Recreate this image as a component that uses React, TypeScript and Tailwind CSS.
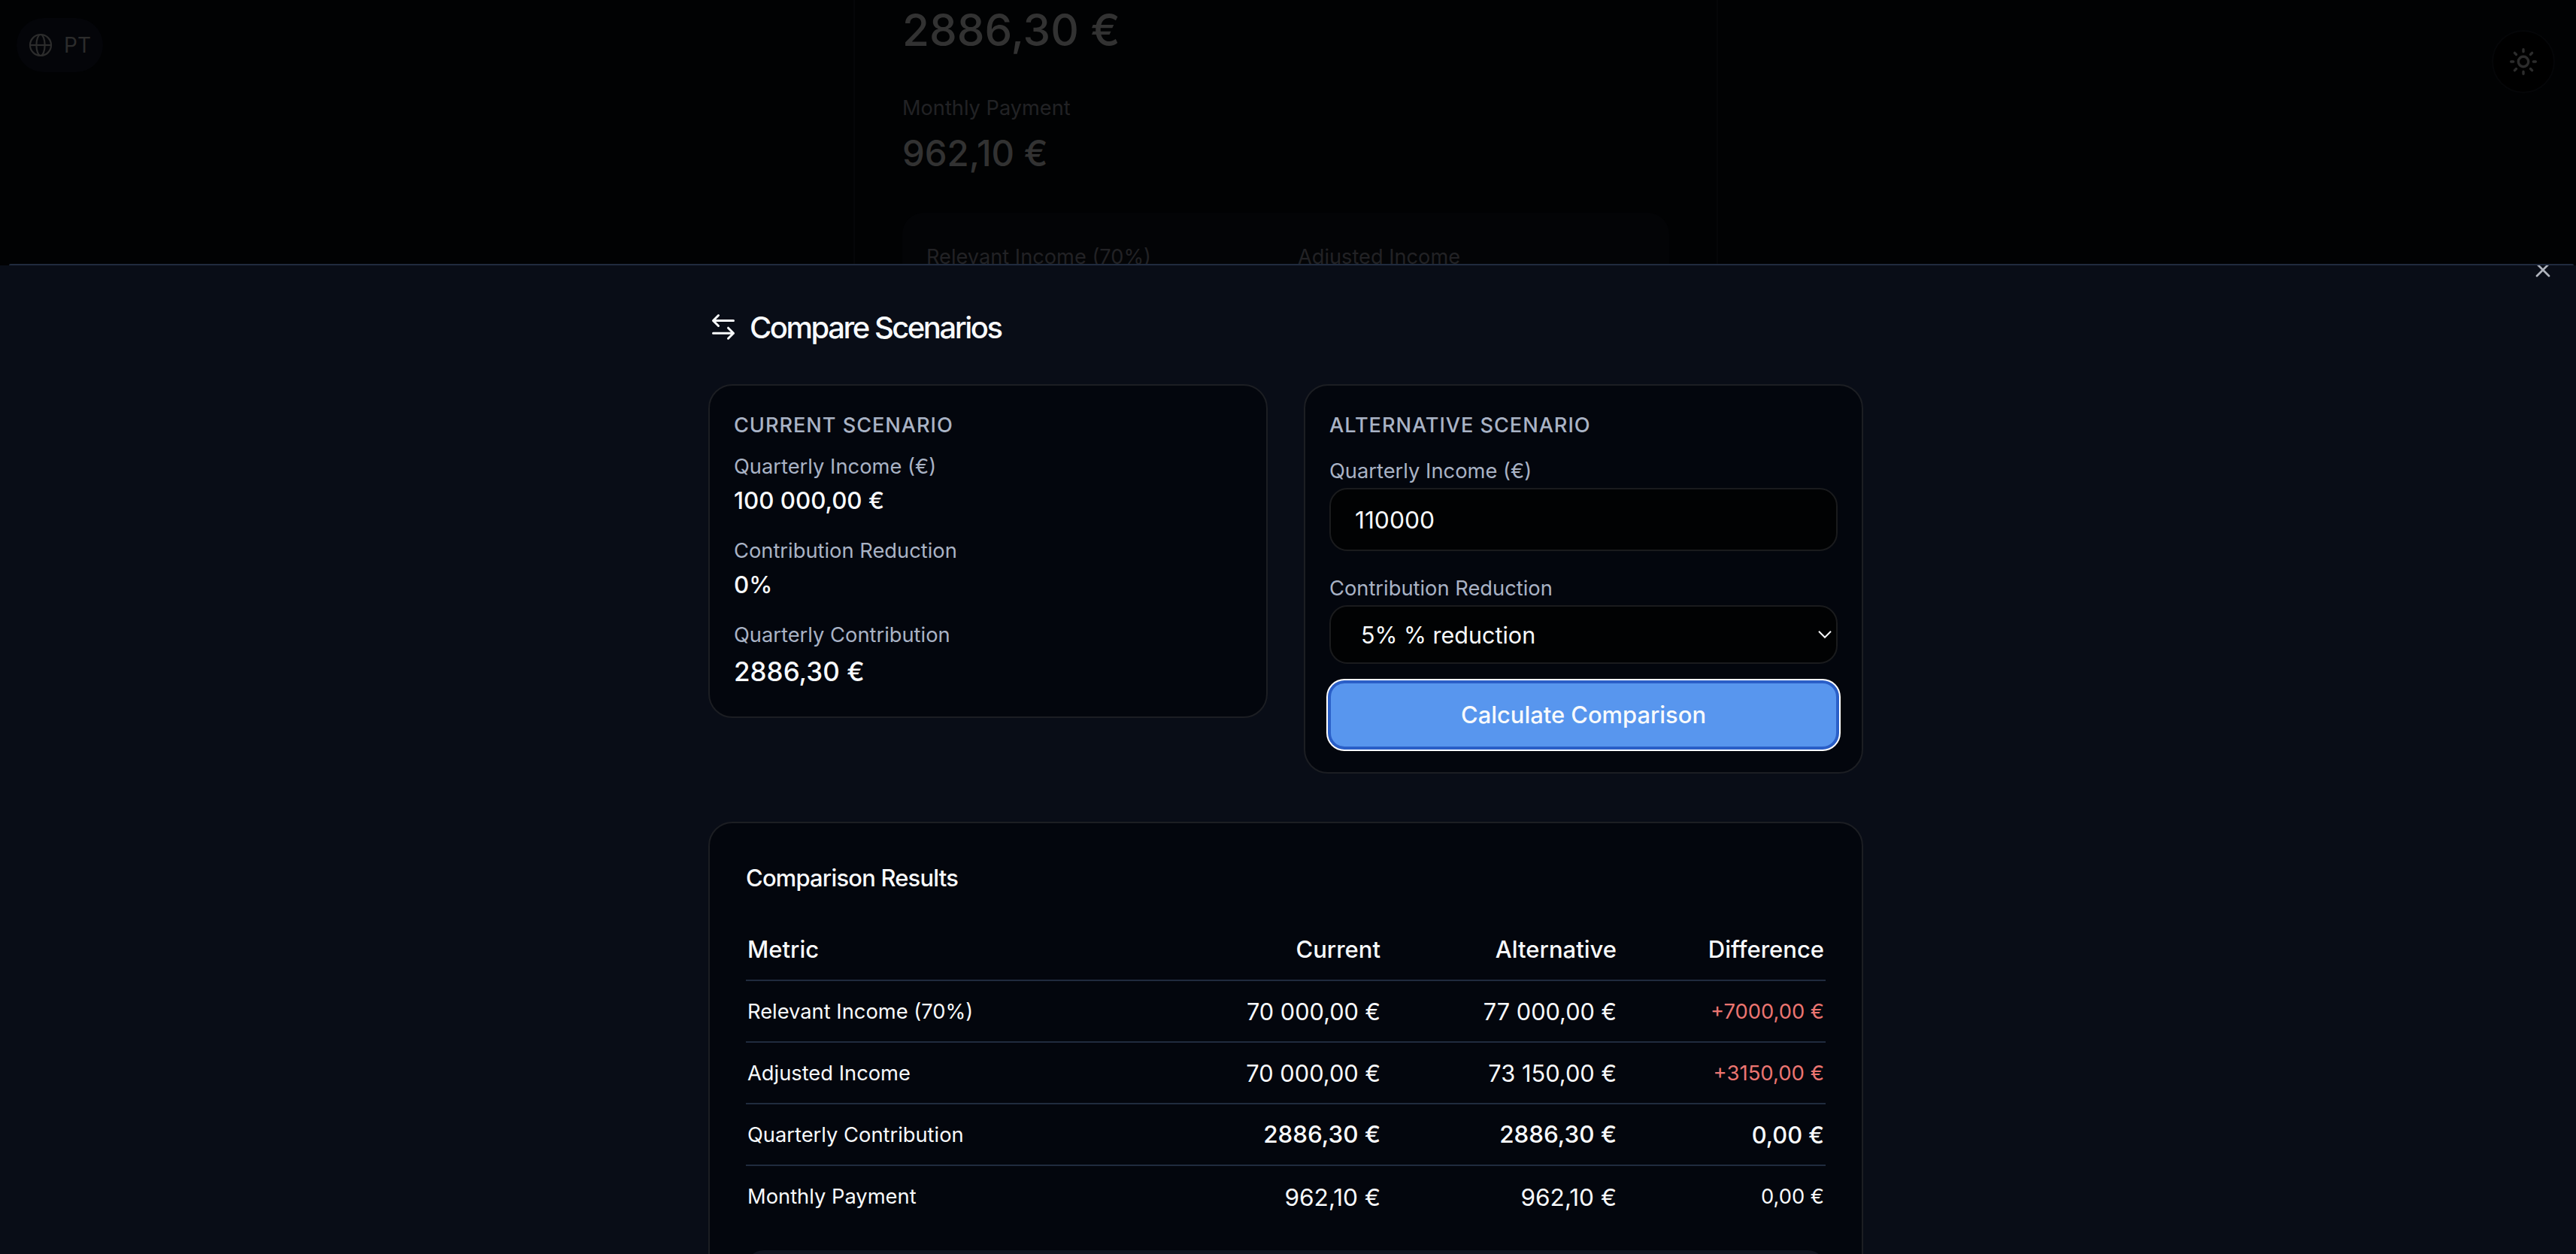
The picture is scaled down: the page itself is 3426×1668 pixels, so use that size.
import React from 'react';
import { X } from 'lucide-react';

const rows = [
  { metric: 'Relevant Income (70%)', current: '70 000,00 €', alternative: '77 000,00 €', difference: '+7000,00 €', tone: 'text-[27.3px] text-[#eb7571]', value: 'text-[30.7px]' },
  { metric: 'Adjusted Income', current: '70 000,00 €', alternative: '73 150,00 €', difference: '+3150,00 €', tone: 'text-[27.5px] text-[#eb7571]', value: 'text-[30.8px]' },
  { metric: 'Quarterly Contribution', current: '2886,30 €', alternative: '2886,30 €', difference: '0,00 €', tone: 'text-[30.8px] font-medium', value: 'text-[31.4px] font-medium' },
  { metric: 'Monthly Payment', current: '962,10 €', alternative: '962,10 €', difference: '0,00 €', tone: 'text-[27.3px]', value: 'text-[31.6px]' },
];

const current = [
  { label: 'Quarterly Income (€)', value: '100 000,00 €', size: 'text-[31.3px] leading-[48px] pt-px -mb-px' },
  { label: 'Contribution Reduction', value: '0%', size: 'text-[31.3px] leading-[48px] pt-px -mb-px' },
  { label: 'Quarterly Contribution', value: '2886,30 €', size: 'text-[35px] leading-[56px]' },
];

const Backdrop: React.FC = () => (
  <div className="flex h-[351px] justify-between overflow-hidden">
    <div className="ml-[22px] mt-6 flex h-[72px] w-[115px] items-center rounded-[36px] bg-[#040509] pl-4 text-[#2c2c2c]">
      <svg width="32" height="32" viewBox="0 0 32 32" fill="none" stroke="currentColor" strokeWidth="2.2">
        <circle cx="16" cy="16" r="14" />
        <ellipse cx="16" cy="16" rx="5.6" ry="14" />
        <path d="M2 16h28" />
      </svg>
      <span className="ml-[15px] text-[28px]">PT</span>
    </div>

    <div className="ml-[998px] w-[1150px] border-x-2 border-[#050608] px-[63px] text-[#323232]">
      <div className="mt-2 h-[64px] text-[58.4px] font-medium leading-[64px]">2886,30 €</div>
      <div className="mt-[52px] text-[27.2px] leading-10 text-[#222225]">Monthly Payment</div>
      <div className="mt-2.5 text-[47.3px] font-medium leading-[60px]">962,10 €</div>
      <div className="mt-[49px] grid h-[100px] grid-cols-2 gap-8 rounded-[28px] bg-[#030406] px-8 pt-[39px] text-[27.2px] leading-10 text-[#222225]">
        <div>Relevant Income (70%)</div>
        <div>Adjusted Income</div>
      </div>
    </div>

    <div className="ml-auto mr-7 mt-10 flex h-[84px] w-[84px] items-center justify-center rounded-full border-2 border-[#050608] bg-black text-[#2c2c2c]">
      <svg width="38" height="38" viewBox="0 0 38 38" fill="none" stroke="currentColor" strokeWidth="3.4" strokeLinecap="round">
        <circle cx="19" cy="19" r="6.7" />
        <path d="M19 2.7v3M19 32.3v3M2.7 19h3M32.3 19h3M7.4 7.4l2.1 2.1M28.5 28.5l2.1 2.1M7.4 30.6l2.1-2.1M28.5 9.5l2.1-2.1" />
      </svg>
    </div>
  </div>
);

const CurrentScenario: React.FC = () => (
  <div className="h-[444px] w-[744px] rounded-[32px] border-2 border-[#1c1e23] bg-[#03060d] px-8 pt-[33px]">
    <h3 className="text-[27.2px] font-medium uppercase leading-10 tracking-[0.034em] text-[#a9b3c5]">Current Scenario</h3>
    <div className="mt-[15px]">
      {current.map((item) => (
        <div key={item.label} className="mb-6">
          <div className="text-[27.3px] leading-10 text-[#a9b3c5]">{item.label}</div>
          <div className={`font-medium ${item.size}`}>{item.value}</div>
        </div>
      ))}
    </div>
  </div>
);

const AlternativeScenario: React.FC = () => (
  <div className="h-[518px] w-[744px] rounded-[32px] border-2 border-[#1c1e23] bg-[#03060d] px-8 pt-[33px]">
    <h3 className="text-[27.2px] font-medium uppercase leading-10 tracking-[0.034em] text-[#a9b3c5]">Alternative Scenario</h3>
    <div className="mt-[21px] text-[27.3px] leading-10 text-[#a9b3c5]">Quarterly Income (€)</div>
    <div className="mt-[2px] flex h-[84px] items-center rounded-3xl border-2 border-[#1a1b1d] bg-[#010203] px-8 pt-0.5 text-[31.8px]">110000</div>
    <div className="mt-[30px] text-[27.3px] leading-10 text-[#a9b3c5]">Contribution Reduction</div>
    <div className="mt-[2px] flex h-[78px] items-center justify-between rounded-3xl border-2 border-[#1a1b1d] bg-[#010203] pl-10 pr-1.5 text-[30.5px]">
      <span className="pt-px">5% % reduction</span>
      <svg width="20" height="12" viewBox="0 0 20 12" fill="none" stroke="currentColor" strokeWidth="2">
        <path d="M3 1.8l8 8 8-8" />
      </svg>
    </div>
    <button className="mt-6 flex h-[88px] w-full items-center justify-center rounded-[20px] border-2 border-[#2a5fc8] bg-[#5896ee] pt-px text-[30.9px] font-medium shadow-[0_0_0_2px_#2a5fc8,0_0_0_4px_#ffffff]">
      Calculate Comparison
    </button>
  </div>
);

const ComparisonResults: React.FC = () => (
  <div className="mt-[64px] h-[640px] rounded-[32px] border-2 border-[#1c1e23] bg-[#03060d] px-12 pt-[49px]">
    <h3 className="text-[30.9px] font-medium leading-[48px] tracking-[-0.025em]">Comparison Results</h3>
    <table className="mt-[30px] w-full table-fixed border-collapse">
      <thead>
        <tr className="h-[82px] border-b-2 border-[#202b3e] text-[31px]">
          <th className="w-[500px] pl-0.5 pt-0.5 text-left font-medium">Metric</th>
          <th className="w-[344px] pt-0.5 text-right font-medium">Current</th>
          <th className="w-[314px] pt-0.5 text-right font-medium">Alternative</th>
          <th className="pr-0.5 pt-0.5 text-right font-medium">Difference</th>
        </tr>
      </thead>
      <tbody>
        {rows.map((row) => (
          <tr key={row.metric} className="h-[82px] border-b-2 border-[#202b3e] last:border-b-0">
            <td className="pl-0.5 pt-0.5 text-[27.3px]">{row.metric}</td>
            <td className={`pt-0.5 text-right ${row.value}`}>{row.current}</td>
            <td className={`pt-0.5 text-right ${row.value}`}>{row.alternative}</td>
            <td className={`pr-0.5 pt-0.5 text-right ${row.tone}`}>{row.difference}</td>
          </tr>
        ))}
      </tbody>
    </table>
    <div className="mt-[31px] h-24 rounded-3xl bg-[#11141f]" />
  </div>
);

const App: React.FC = () => {
  return (
    <div className="h-[1668px] w-[3426px] overflow-hidden bg-[#010203] font-['Inter',sans-serif] text-[#f8fafc]">
      <Backdrop />
      <div className="ml-3 mr-[3px] h-[2px] rounded-t-full bg-[#202b3e]" />
      <div className="relative h-[1315px] overflow-hidden bg-[#090d17]">
        <X className="absolute -top-[10px] right-7 text-[#b0b4bd]" size={32} strokeWidth={2} />
        <div className="mx-auto w-[1536px] translate-x-[-3px] pt-[54px]">
          <h2 className="flex h-[56px] items-center text-[40px] font-medium tracking-[-0.062em]">
            <svg className="ml-1 mr-[15px]" width="36" height="36" viewBox="0 0 36 36" fill="none" stroke="currentColor" strokeWidth="3" strokeLinecap="round" strokeLinejoin="round">
              <path d="M29.5 9.5h-27M9.5 2.5l-7 7 7 7M2.5 26.2h27M22.5 19.2l7 7-7 7" />
            </svg>
            <span className="pt-0.5">Compare Scenarios</span>
          </h2>
          <div className="mt-12 flex items-start justify-between">
            <CurrentScenario />
            <AlternativeScenario />
          </div>
          <ComparisonResults />
        </div>
      </div>
    </div>
  );
};

export default App;
